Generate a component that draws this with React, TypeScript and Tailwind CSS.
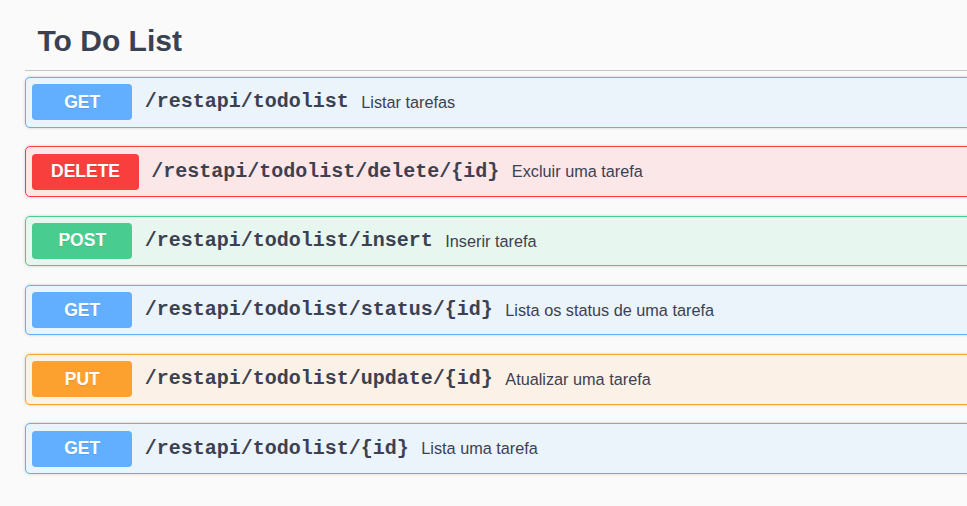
const ops = [
  { method: "GET", path: "/restapi/todolist", desc: "Listar tarefas" },
  { method: "DELETE", path: "/restapi/todolist/delete/{id}", desc: "Excluir uma tarefa" },
  { method: "POST", path: "/restapi/todolist/insert", desc: "Inserir tarefa" },
  { method: "GET", path: "/restapi/todolist/status/{id}", desc: "Lista os status de uma tarefa" },
  { method: "PUT", path: "/restapi/todolist/update/{id}", desc: "Atualizar uma tarefa" },
  { method: "GET", path: "/restapi/todolist/{id}", desc: "Lista uma tarefa" },
];

const styles: Record<string, { block: string; badge: string }> = {
  GET: { block: "bg-[#ebf3fb] border-[#61affe]", badge: "bg-[#61affe]" },
  DELETE: { block: "bg-[#fbe7e7] border-[#f93e3e]", badge: "bg-[#f93e3e]" },
  POST: { block: "bg-[#e8f6f0] border-[#49cc90]", badge: "bg-[#49cc90]" },
  PUT: { block: "bg-[#fbf1e6] border-[#fca130]", badge: "bg-[#fca130]" },
};

export default function App() {
  return (
    <div className="w-[967px] h-[506px] overflow-hidden bg-[#fafafa] font-['Liberation_Sans',Arial,sans-serif] text-[#3b4151]">
      <div className="w-[1400px] px-[25px] pt-[10px]">
        <h4 className="flex items-center border-b border-[#c4c6cb] py-[12.5px] pl-[12.5px] pr-[25px] text-[30px] leading-[35px] font-bold">
          To Do List
        </h4>
        <div className="mt-[6px]">
          {ops.map((op, i) => {
            const s = styles[op.method];
            return (
              <div
                key={i}
                className={`mb-[18.75px] rounded-[5px] border shadow-[0_0_3px_rgba(0,0,0,0.19)] ${s.block}`}
              >
                <div className="flex items-center p-[6.25px]">
                  <span
                    className={`min-w-[100px] rounded-[3.75px] px-[18.75px] py-[7.5px] text-center text-[17.5px] leading-[21px] font-bold text-white [text-shadow:0_1px_0_rgba(0,0,0,0.1)] ${s.badge}`}
                  >
                    {op.method}
                  </span>
                  <span className="px-[12.5px] font-['Liberation_Mono','Courier_New',monospace] text-[20px] font-bold">
                    {op.path}
                  </span>
                  <span className="text-[16.25px]">{op.desc}</span>
                </div>
              </div>
            );
          })}
        </div>
      </div>
    </div>
  );
}
